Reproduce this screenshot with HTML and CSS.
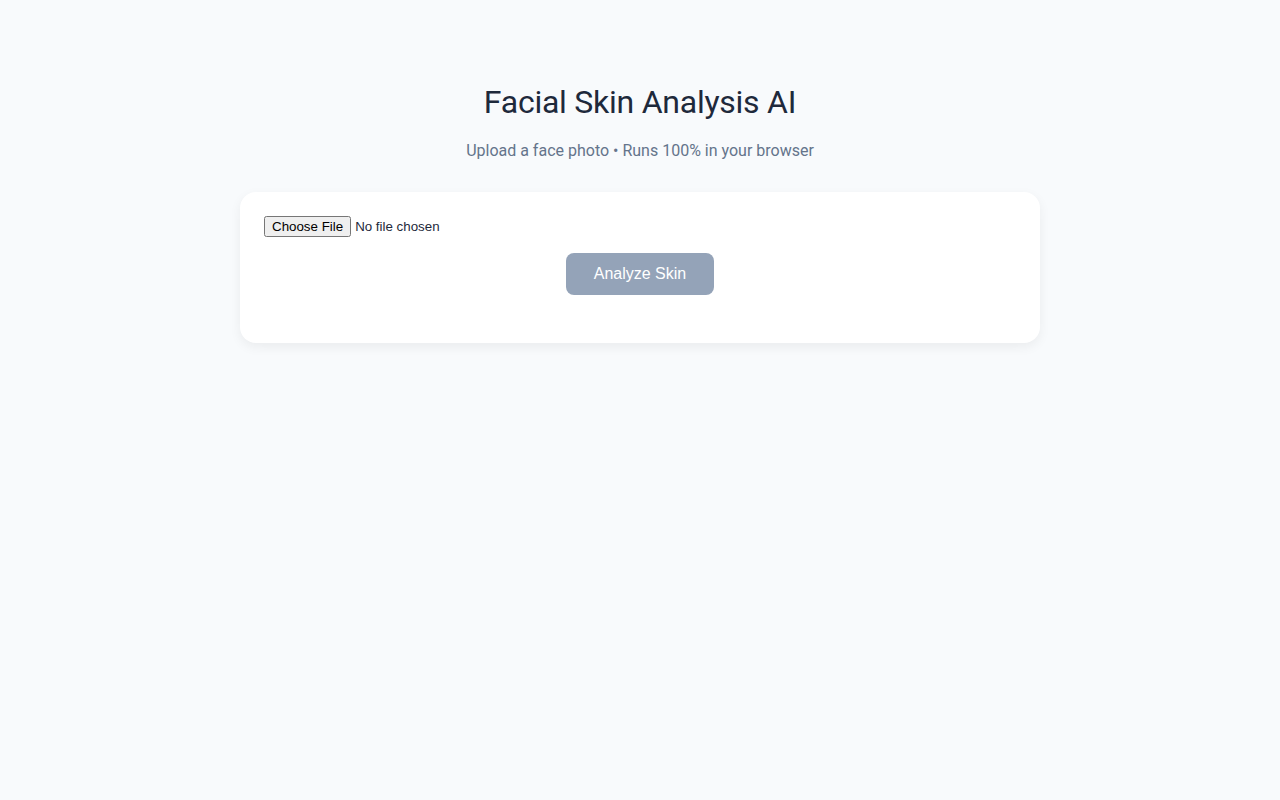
FILE: index.html
```html
<!DOCTYPE html>
<html lang="en">
<head>
<meta charset="utf-8">
<title>Facial Skin Analysis AI</title>
<link rel="stylesheet" href="styles.css">
</head>
<body>
<main class="container">
  <h1 class="title">Facial Skin Analysis AI</h1>
  <p class="subtitle">Upload a face photo • Runs 100% in your browser</p>
  <section class="card">
    <input type="file" class="file-input" accept="image/*">
    <div class="actions">
      <button class="analyze-btn" disabled>Analyze Skin</button>
    </div>
    <div class="result"></div>
  </section>
</main>
</body>
</html>
```

FILE: styles.css
```css
* { box-sizing: border-box; }
body {
  margin: 0;
  background: #f8fafc;
  font-family: Roboto, sans-serif;
  color: #1e293b;
}
.container {
  max-width: 800px;
  margin: 0 auto;
  padding: 40px 0;
}
.title {
  text-align: center;
  font-size: 32px;
  font-weight: 400;
  letter-spacing: -0.25px;
  margin: 42px 0 0;
  line-height: 40px;
  color: #1e293b;
}
.subtitle {
  text-align: center;
  color: #64748b;
  font-size: 16px;
  margin: 18px 0 30px;
  line-height: 22px;
}
.card {
  background: #fff;
  border-radius: 16px;
  padding: 24px;
  box-shadow: 0 4px 12px rgba(0,0,0,0.06);
}
.file-input {
  font-family: "Liberation Sans", Arial, sans-serif;
  font-size: 13.33px;
  display: block;
}
.actions {
  display: flex;
  justify-content: center;
  margin-top: 16px;
}
.analyze-btn {
  font-family: "Liberation Sans", Arial, sans-serif;
  font-size: 16px;
  background: #94a3b8;
  color: #fff;
  border: none;
  border-radius: 8px;
  width: 148px;
  height: 42px;
}
.result {
  height: 24px;
}
```
